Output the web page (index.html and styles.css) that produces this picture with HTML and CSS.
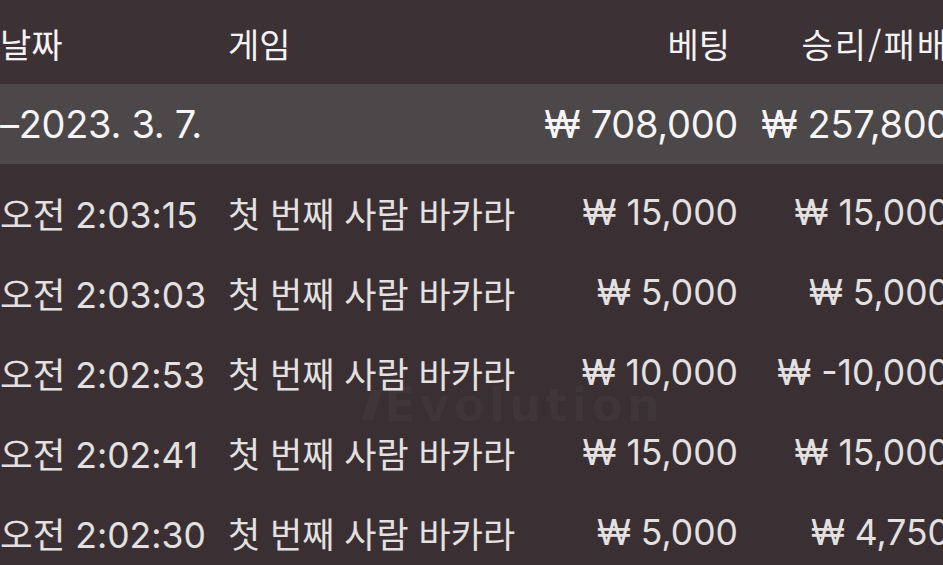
FILE: index.html
```html
<!DOCTYPE html>
<html lang="ko">
<head>
<meta charset="utf-8">
<link rel="stylesheet" href="styles.css">
</head>
<body>
<div class="screen">
  <div class="table">
    <div class="row head">
      <div class="c date">날짜</div>
      <div class="c game">게임</div>
      <div class="c num">베팅</div>
      <div class="c num">승리/패배</div>
    </div>
    <div class="row day">
      <div class="c date">–2023. 3. 7.</div>
      <div class="c game"></div>
      <div class="c num">₩ 708,000</div>
      <div class="c num">₩ 257,800</div>
    </div>
    <div class="row item">
      <div class="c date">오전 2:03:15</div>
      <div class="c game">첫 번째 사람 바카라</div>
      <div class="c num">₩ 15,000</div>
      <div class="c num">₩ 15,000</div>
    </div>
    <div class="row item">
      <div class="c date">오전 2:03:03</div>
      <div class="c game">첫 번째 사람 바카라</div>
      <div class="c num">₩ 5,000</div>
      <div class="c num">₩ 5,000</div>
    </div>
    <div class="row item">
      <div class="c date">오전 2:02:53</div>
      <div class="c game">첫 번째 사람 바카라</div>
      <div class="c num">₩ 10,000</div>
      <div class="c num">₩ -10,000</div>
    </div>
    <div class="row item">
      <div class="c date">오전 2:02:41</div>
      <div class="c game">첫 번째 사람 바카라</div>
      <div class="c num">₩ 15,000</div>
      <div class="c num">₩ 15,000</div>
    </div>
    <div class="row item">
      <div class="c date">오전 2:02:30</div>
      <div class="c game">첫 번째 사람 바카라</div>
      <div class="c num">₩ 5,000</div>
      <div class="c num">₩ 4,750</div>
    </div>
  </div>
  <div class="watermark">
    <svg class="wm-logo" width="20" height="34" viewBox="0 0 20 34"><path d="M9 2 L20 2 L11 32 L0 32 Z" fill="currentColor"/></svg>
    <span>Evolution</span>
  </div>
</div>
</body>
</html>
```
FILE: styles.css
```css
html, body {
  margin: 0;
  padding: 0;
  background: #3a3033;
  overflow: hidden;
}
.screen {
  position: relative;
  width: 943px;
  height: 565px;
  overflow: hidden;
  background: #3a3033;
  font-family: Inter, "Noto Sans CJK KR", sans-serif;
  color: #e4e0e0;
}
.table {
  width: 950px;
  display: flex;
  flex-direction: column;
}
.row {
  display: grid;
  grid-template-columns: 228px 1fr 212px 212px;
  align-items: center;
  height: 80px;
  font-size: 35.5px;
  white-space: nowrap;
  box-sizing: border-box;
}
.row.item {
  padding-top: 16px;
}
.row.item .game {
  font-size: 35px;
}
.row.head {
  height: 84px;
  background: #3c3134;
  color: #f4f2f2;
  font-family: "Noto Sans CJK KR", sans-serif;
  font-size: 34px;
  padding-top: 2px;
}
.row.head .num:nth-child(3) {
  padding-right: 8px;
}
.row.head .num:nth-child(4) {
  letter-spacing: 2px;
}
.row.day {
  background: #4c4748;
  color: #f6f4f4;
  font-size: 38px;
  letter-spacing: -0.3px;
}
.c.num {
  text-align: right;
}
.watermark {
  position: absolute;
  left: 362px;
  top: 382px;
  display: flex;
  align-items: center;
  gap: 2px;
  font-family: "DejaVu Sans", sans-serif;
  font-weight: 700;
  font-size: 46px;
  letter-spacing: 4px;
  line-height: 1;
  color: rgba(255, 255, 255, 0.03);
  pointer-events: none;
}
```
